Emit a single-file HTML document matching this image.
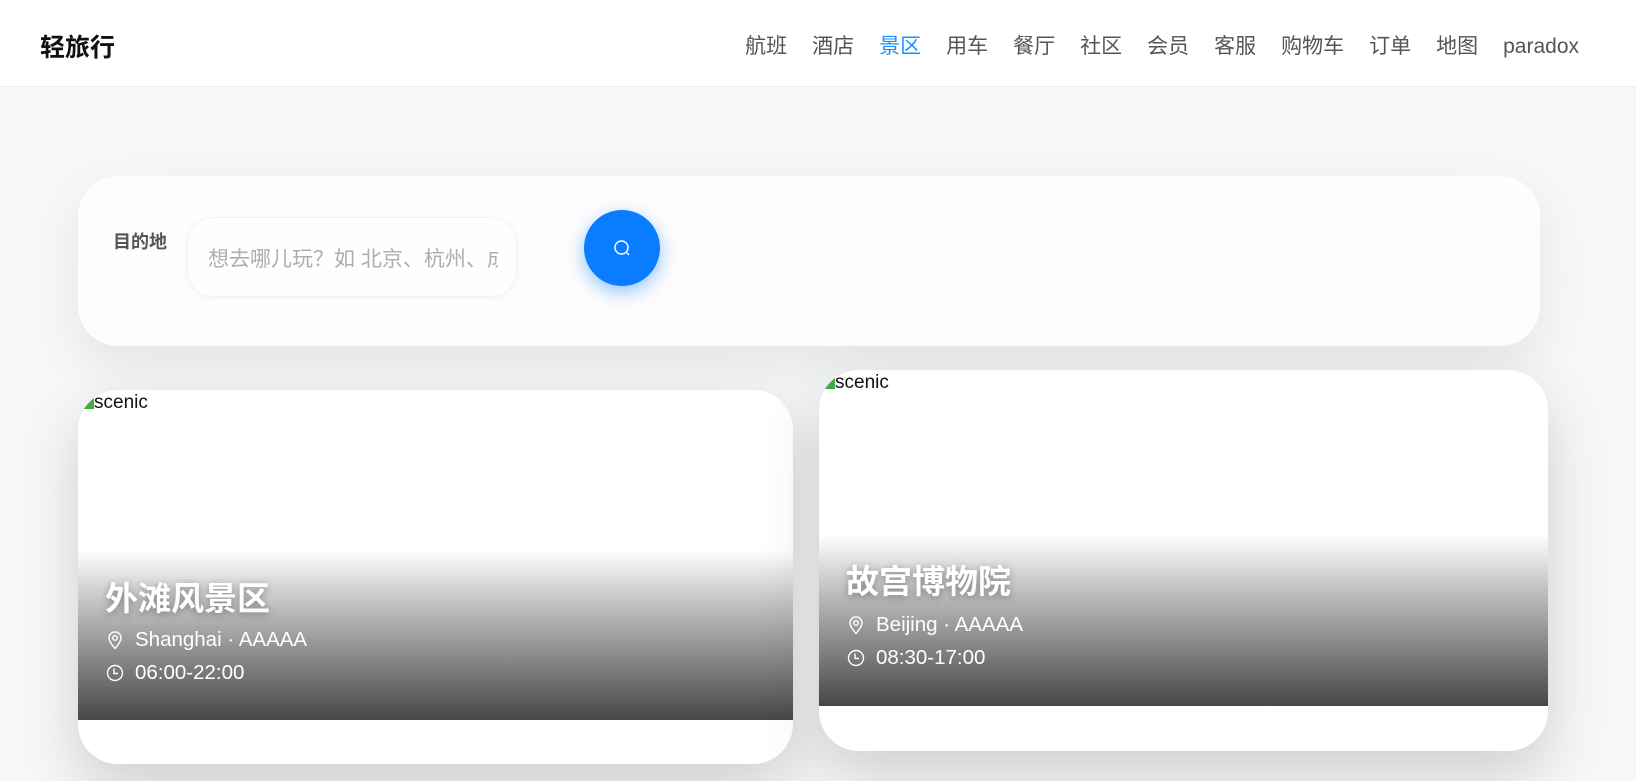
<!DOCTYPE html>
<html><head><meta charset="utf-8"><style>
*{margin:0;padding:0;box-sizing:border-box}
body{width:1636px;height:781px;overflow:hidden;background:#f6f7f9;font-family:"Liberation Sans","Noto Sans CJK SC",sans-serif;position:relative}
.hd{position:absolute;left:0;top:0;width:1636px;height:87px;background:#fff;border-bottom:1px solid #eceef1}
.logo{position:absolute;left:40px;top:28px;font-size:25px;font-weight:bold;color:#111}
.nav{position:absolute;right:57px;top:30px;display:flex;align-items:baseline;gap:25px;font-size:21px;color:#555}
.nav .on{color:#1890ff}
.sc{position:absolute;left:78px;top:176px;width:1462px;height:170px;background:#fdfdfd;border-radius:40px;box-shadow:0 20px 50px rgba(0,0,0,.08)}
.lab{position:absolute;left:35px;top:52px;font-size:18px;font-weight:bold;color:#555}
.inp{position:absolute;left:109px;top:41px;width:330px;height:80px;border-radius:26px;background:#fefefe;border:1px solid #f0f1f3;box-shadow:0 2px 6px rgba(0,0,0,.03);font-size:21px;color:#aaaeb5;padding:25px 0 0 20px;white-space:nowrap;overflow:hidden}
.inp span{display:block;width:290px;overflow:hidden}
.btn{position:absolute;left:506px;top:34px;width:76px;height:76px;border-radius:50%;background:#0a7cff;box-shadow:0 6px 18px rgba(10,124,255,.45)}
.card{position:absolute;background:#fff;border-radius:40px;overflow:hidden;box-shadow:0 25px 60px rgba(0,0,0,.16)}
.ov{position:absolute;left:0;right:0;background:linear-gradient(to bottom,rgba(255,255,255,0),rgba(190,190,190,.9) 30%,#474747)}
.alt{position:absolute;left:4px;top:2px;font-size:19px;color:#111}
.alt i{display:inline-block;width:12px;height:14px;background:linear-gradient(135deg,#cde 40%,#4a4 60%);vertical-align:-1px}
.t{position:absolute;left:27px;font-size:33px;font-weight:bold;color:#fff;text-shadow:0 2px 8px rgba(0,0,0,.35)}
.m{position:absolute;left:28px;font-size:20.5px;color:#fff;display:flex;align-items:center;gap:11px}
</style></head><body>
<div class="hd"><div class="logo">轻旅行</div>
<div class="nav"><span>航班</span><span>酒店</span><span class="on">景区</span><span>用车</span><span>餐厅</span><span>社区</span><span>会员</span><span>客服</span><span>购物车</span><span>订单</span><span>地图</span><span>paradox</span></div></div>
<div class="sc"><div class="lab">目的地</div><div class="inp"><span>想去哪儿玩？如 北京、杭州、成都</span></div>
<div class="btn"><svg width="76" height="76" viewBox="0 0 76 76"><circle cx="37.5" cy="37.5" r="6.5" fill="none" stroke="#fff" stroke-width="1.5"/><path d="M42 42l3 3" stroke="#fff" stroke-width="1.5"/></svg></div></div>

<div class="card" style="left:78px;top:390px;width:715px;height:374px">
<div class="ov" style="top:160px;height:170px"></div>
<div class="alt"><i></i>scenic</div>
<div class="t" style="top:182px">外滩风景区</div>
<div class="m" style="top:238px"><svg width="18" height="20" viewBox="0 0 18 20"><path d="M9 18.5C5 14 3 11 3 8a6 6 0 0 1 12 0c0 3-2 6-6 10.5z" fill="none" stroke="#fff" stroke-width="1.4"/><circle cx="9" cy="8" r="2.3" fill="none" stroke="#fff" stroke-width="1.4"/></svg>Shanghai · AAAAA</div>
<div class="m" style="top:271px"><svg width="18" height="20" viewBox="0 0 18 20"><circle cx="9" cy="10" r="7.5" fill="none" stroke="#fff" stroke-width="1.4"/><path d="M8 5.5v5h4" fill="none" stroke="#fff" stroke-width="1.4"/></svg>06:00-22:00</div>
</div>

<div class="card" style="left:819px;top:370px;width:729px;height:381px">
<div class="ov" style="top:165px;height:171px"></div>
<div class="alt"><i></i>scenic</div>
<div class="t" style="top:185px">故宫博物院</div>
<div class="m" style="top:243px"><svg width="18" height="20" viewBox="0 0 18 20"><path d="M9 18.5C5 14 3 11 3 8a6 6 0 0 1 12 0c0 3-2 6-6 10.5z" fill="none" stroke="#fff" stroke-width="1.4"/><circle cx="9" cy="8" r="2.3" fill="none" stroke="#fff" stroke-width="1.4"/></svg>Beijing · AAAAA</div>
<div class="m" style="top:276px"><svg width="18" height="20" viewBox="0 0 18 20"><circle cx="9" cy="10" r="7.5" fill="none" stroke="#fff" stroke-width="1.4"/><path d="M8 5.5v5h4" fill="none" stroke="#fff" stroke-width="1.4"/></svg>08:30-17:00</div>
</div>
</body></html>
